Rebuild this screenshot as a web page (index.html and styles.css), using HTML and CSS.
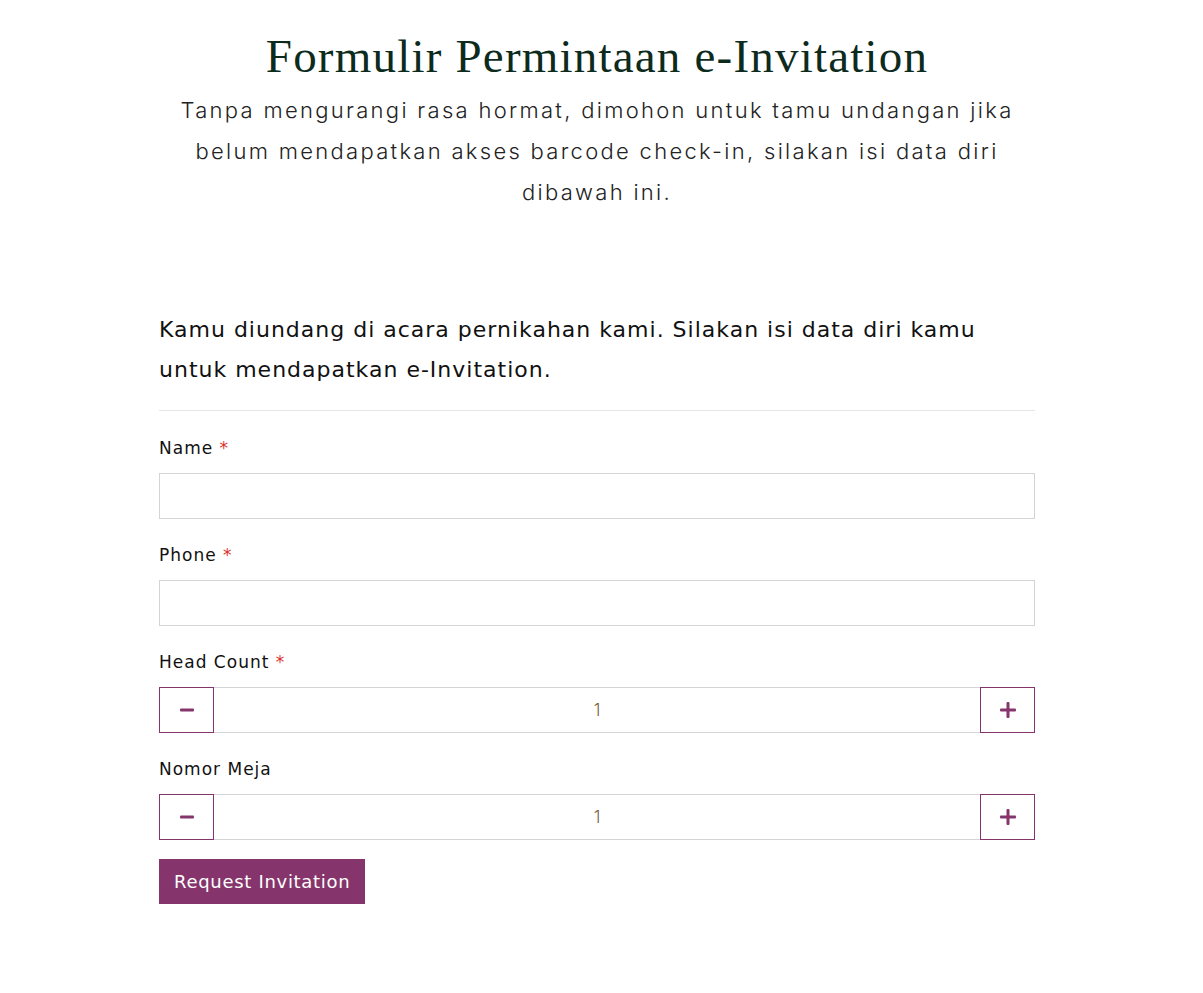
FILE: index.html
```html
<!DOCTYPE html>
<html lang="id">

<head>
  <meta charset="UTF-8" />
  <meta name="viewport" content="width=device-width, initial-scale=1" />
  <title>Formulir Permintaan e-Invitation</title>
  <link rel="stylesheet" href="styles.css">
</head>

<body>
  <div class="page">
    <header class="intro">
      <h1>Formulir Permintaan e-Invitation</h1>
      <p>Tanpa mengurangi rasa hormat, dimohon untuk tamu undangan jika belum mendapatkan akses barcode check-in, silakan isi data diri dibawah ini.</p>
    </header>

    <form class="form" id="inviteForm">
      <p class="lead">Kamu diundang di acara pernikahan kami. Silakan isi data diri kamu untuk mendapatkan e-Invitation.</p>
      <hr />

      <div class="field">
        <label for="name">Name <span class="req">*</span></label>
        <input type="text" id="name" class="text-input" />
      </div>

      <div class="field">
        <label for="phone">Phone <span class="req">*</span></label>
        <input type="tel" id="phone" class="text-input" />
      </div>

      <div class="field">
        <label>Head Count <span class="req">*</span></label>
        <div class="stepper">
          <button type="button" class="step minus" aria-label="Kurangi">
            <svg width="14" height="14" viewBox="0 0 14 14"><rect x="0" y="5.5" width="14" height="3" rx="1" /></svg>
          </button>
          <input type="text" class="step-value" value="1" />
          <button type="button" class="step plus" aria-label="Tambah">
            <svg width="16" height="16" viewBox="0 0 16 16"><rect x="0" y="6.5" width="16" height="3" rx="1" /><rect x="6.5" y="0" width="3" height="16" rx="1" /></svg>
          </button>
        </div>
      </div>

      <div class="field last">
        <label>Nomor Meja</label>
        <div class="stepper">
          <button type="button" class="step minus" aria-label="Kurangi">
            <svg width="14" height="14" viewBox="0 0 14 14"><rect x="0" y="5.5" width="14" height="3" rx="1" /></svg>
          </button>
          <input type="text" class="step-value" value="1" />
          <button type="button" class="step plus" aria-label="Tambah">
            <svg width="16" height="16" viewBox="0 0 16 16"><rect x="0" y="6.5" width="16" height="3" rx="1" /><rect x="6.5" y="0" width="3" height="16" rx="1" /></svg>
          </button>
        </div>
      </div>

      <button type="submit" class="submit">Request Invitation</button>
    </form>
  </div>

  <script>
    document.querySelectorAll(".stepper").forEach(function (stepper) {
      const value = stepper.querySelector(".step-value");
      stepper.querySelector(".minus").addEventListener("click", function () {
        const n = parseInt(value.value) || 1;
        value.value = Math.max(1, n - 1);
      });
      stepper.querySelector(".plus").addEventListener("click", function () {
        const n = parseInt(value.value) || 0;
        value.value = n + 1;
      });
    });

    document.getElementById("inviteForm").addEventListener("submit", function (e) {
      e.preventDefault();
    });
  </script>
</body>

</html>
```

FILE: styles.css
```css
body {
  margin: 0;
  padding-right: 9px;
  background-color: #fff;
  font-family: "DejaVu Sans", sans-serif;
  letter-spacing: 1px;
  color: #1e1e1e;
}

.page {
  width: 876px;
  margin: 0 auto;
  padding: 30px 0 80px;
}

.intro {
  text-align: center;
  margin-bottom: 97px;
}

.intro h1 {
  margin: 0;
  font-family: "Liberation Serif", serif;
  font-weight: 400;
  font-size: 47px;
  line-height: 52px;
  letter-spacing: 1.2px;
  color: #0d2b1d;
}

.intro p {
  width: 860px;
  margin: 8px auto 0;
  font-family: Inter, sans-serif;
  font-size: 22px;
  font-weight: 300;
  letter-spacing: 2.3px;
  line-height: 41px;
  color: #222;
}

.lead {
  margin: 0;
  font-size: 22px;
  line-height: 40px;
  color: #111;
}

.form hr {
  border: none;
  border-top: 1px solid #e6e6e6;
  margin: 20px 0 22px;
}

.field {
  margin-bottom: 21px;
}

.field.last {
  margin-bottom: 19px;
}

.field label {
  display: block;
  font-size: 17px;
  line-height: 30px;
  margin-bottom: 10px;
  color: #111;
}

.req {
  color: #d9332b;
}

.text-input {
  display: block;
  box-sizing: border-box;
  width: 100%;
  height: 46px;
  border: 1px solid #d4d4d8;
  padding: 0 12px;
  font: inherit;
  font-size: 16px;
  outline: none;
}

.stepper {
  display: flex;
  height: 46px;
}

.step {
  flex: 0 0 55px;
  box-sizing: border-box;
  border: 1px solid #85356b;
  background-color: #fff;
  padding: 0;
  display: flex;
  align-items: center;
  justify-content: center;
  cursor: pointer;
  fill: #85356b;
}

.step-value {
  flex: 1;
  min-width: 0;
  box-sizing: border-box;
  border: 1px solid #d4d4d8;
  border-left: none;
  border-right: none;
  text-align: center;
  font-family: Inter, sans-serif;
  font-size: 17px;
  font-weight: 300;
  color: #7a6437;
  outline: none;
}

.submit {
  display: block;
  height: 45px;
  padding: 0 15px;
  border: none;
  background-color: #85356b;
  color: #fff;
  font-family: inherit;
  font-size: 18px;
  letter-spacing: 0.7px;
  cursor: pointer;
}
```
